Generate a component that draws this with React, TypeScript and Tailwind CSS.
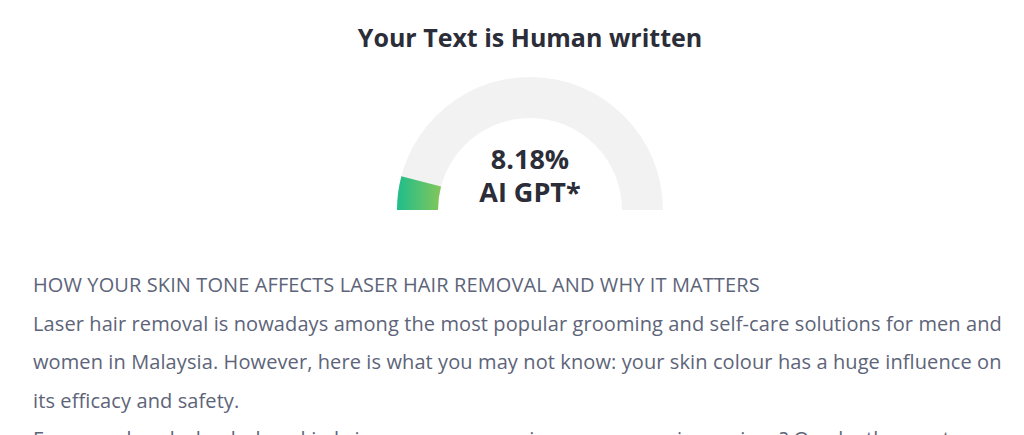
import React from "react";

const PCT = 8.18;

function Gauge() {
  const R = 133;
  const r = 92;
  const a = (PCT / 100) * Math.PI;
  const ox = R - R * Math.cos(a);
  const oy = R - R * Math.sin(a);
  const ix = R - r * Math.cos(a);
  const iy = R - r * Math.sin(a);
  return (
    <div className="relative w-[266px] h-[133px]">
      <svg width="266" height="133" viewBox="0 0 266 133" className="block">
        <defs>
          <linearGradient id="g" x1="0" y1="0" x2="1" y2="0">
            <stop offset="0" stopColor="#1ebd8c" />
            <stop offset="1" stopColor="#84c65a" />
          </linearGradient>
        </defs>
        <path
          d={`M 0 133 A ${R} ${R} 0 0 1 266 133 L ${R + r} 133 A ${r} ${r} 0 0 0 ${R - r} 133 Z`}
          fill="#f2f2f2"
        />
        <path
          d={`M 0 133 A ${R} ${R} 0 0 1 ${ox} ${oy} L ${ix} ${iy} A ${r} ${r} 0 0 0 ${R - r} 133 Z`}
          fill="url(#g)"
        />
      </svg>
      <div className="absolute inset-x-0 top-[65px] flex flex-col items-center text-[27px] font-bold leading-[33px] text-[#2b2d38]">
        <span>8.18%</span>
        <span>AI GPT*</span>
      </div>
    </div>
  );
}

export default function App() {
  return (
    <div className="w-[1024px] h-[435px] overflow-hidden bg-white font-['Open_Sans',sans-serif]">
      <div className="pl-[36px]">
        <h1 className="pt-[19px] text-center text-[25px] font-bold leading-[36px] text-[#2b2d38]">
          Your Text is Human written
        </h1>
        <div className="mt-[22px] flex justify-center">
          <Gauge />
        </div>
      </div>
      <div className="mt-[56px] pl-[33px] pr-[16px] text-[20px] leading-[38.5px] tracking-[0.1px] text-[#5d6479]">
        <p>HOW YOUR SKIN TONE AFFECTS LASER HAIR REMOVAL AND WHY IT MATTERS</p>
        <p>
          Laser hair removal is nowadays among the most popular grooming and self-care solutions for men and
          women in Malaysia. However, here is what you may not know: your skin colour has a huge influence on
          its efficacy and safety.
        </p>
        <p>
          Ever wondered why darker skin brings up some worries or concerns in sessions? Or why the most common fear of friends about the
          treatment is burns?
        </p>
      </div>
    </div>
  );
}
